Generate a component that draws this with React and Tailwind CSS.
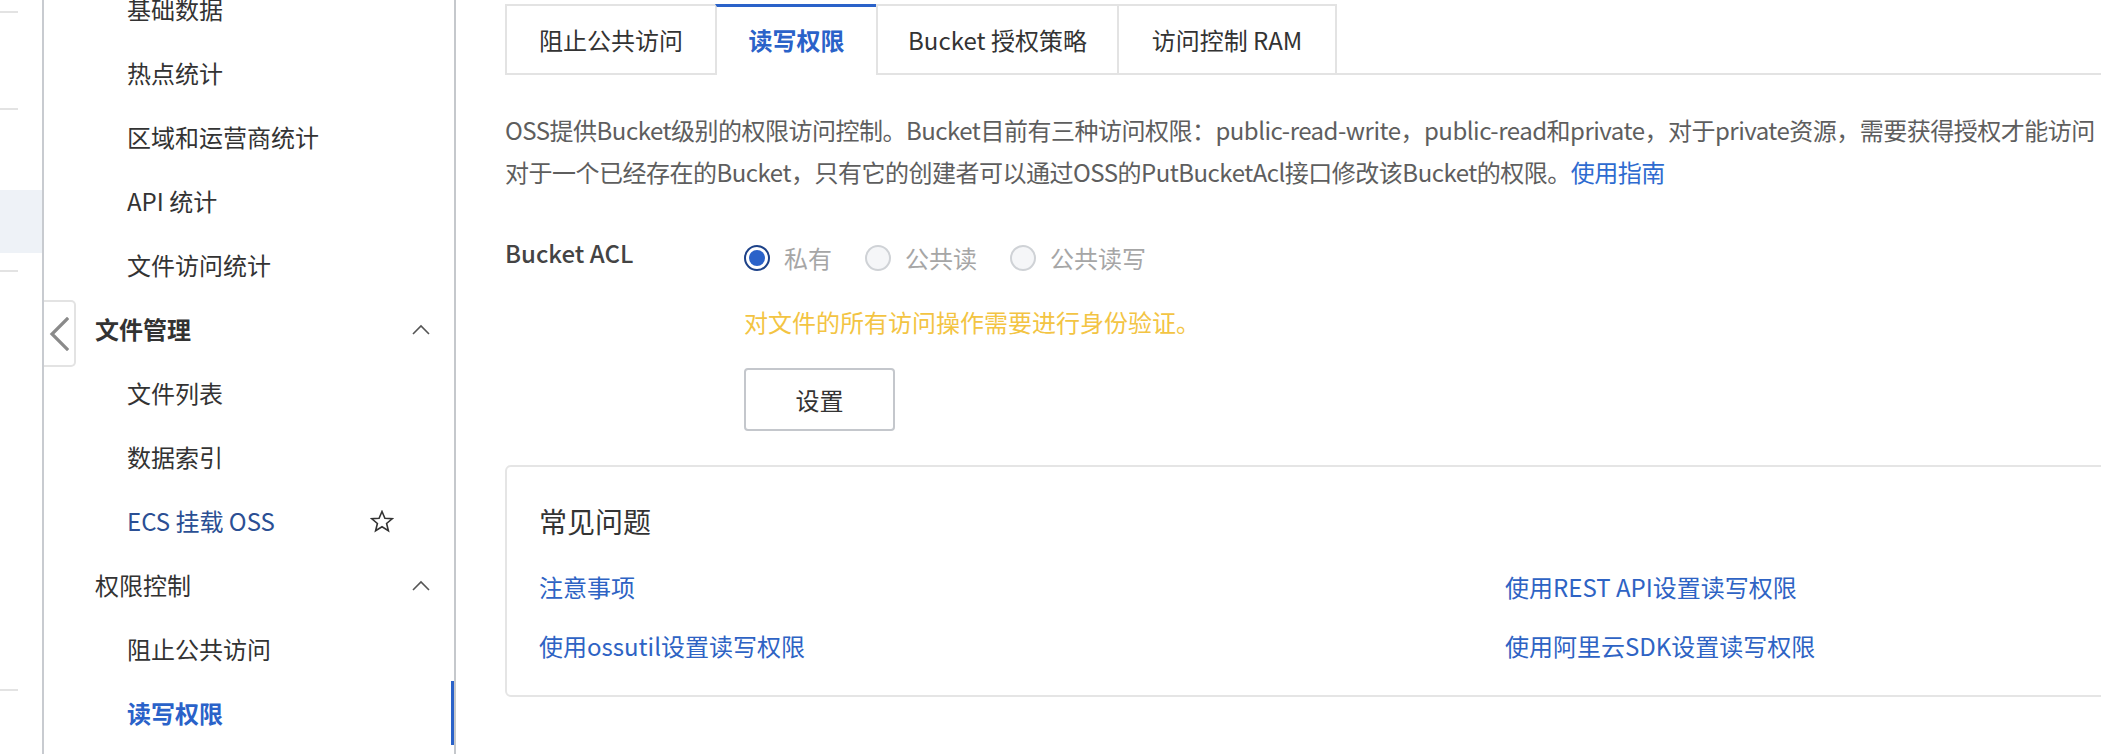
import React from 'react';

const font = { fontFamily: '"Noto Sans CJK SC", "Noto Sans", sans-serif' };

const ChevronUpIcon = () => (
  <svg width="18" height="11" viewBox="0 0 18 11" fill="none" stroke="#555" strokeWidth="1.6">
    <polyline points="1,10 9,2 17,10" />
  </svg>
);

const ChevronLeftIcon = () => (
  <svg width="20" height="34" viewBox="0 0 20 34" fill="none" stroke="#8a8a8a" strokeWidth="3.2" strokeLinecap="square">
    <polyline points="18,2 3,17 18,32" />
  </svg>
);

const StarIcon = () => (
  <svg width="24" height="23" viewBox="0 0 24 23" fill="none" stroke="#333" strokeWidth="1.6" strokeLinejoin="miter">
    <polygon points="12,1.5 14.9,8.3 22.2,8.8 16.6,13.5 18.4,20.7 12,16.8 5.6,20.7 7.4,13.5 1.8,8.8 9.1,8.3" />
  </svg>
);

const menu = [
  { label: '基础数据' },
  { label: '热点统计' },
  { label: '区域和运营商统计' },
  { label: 'API 统计' },
  { label: '文件访问统计' },
  { label: '文件管理', header: true, bold: true },
  { label: '文件列表' },
  { label: '数据索引' },
  { label: 'ECS 挂载 OSS', link: true },
  { label: '权限控制', header: true },
  { label: '阻止公共访问' },
  { label: '读写权限', active: true },
];

const tabs = [
  { label: '阻止公共访问', w: 'w-[210px]' },
  { label: '读写权限', w: 'w-[161px]', active: true },
  { label: 'Bucket 授权策略', w: 'w-[241px]' },
  { label: '访问控制 RAM', w: 'w-[220px]', last: true },
];

const Radio = ({ checked, label }) => (
  <div className="flex items-center">
    {checked ? (
      <span className="w-[26px] h-[26px] rounded-full border-2 border-[#1d4289] bg-white flex items-center justify-center">
        <span className="w-[16px] h-[16px] rounded-full bg-[#2a62c9]" />
      </span>
    ) : (
      <span className="w-[26px] h-[26px] rounded-full border-2 border-[#cfd2d6] bg-[#f5f6f8]" />
    )}
    <span className="ml-[14px] text-[#a6a6a6]">{label}</span>
  </div>
);

export default function App() {
  return (
    <div style={font} className="flex w-[2101px] h-[754px] overflow-hidden bg-white text-[24px] text-[#333]">
      {/* left strip */}
      <div className="w-[42px] flex flex-col shrink-0">
        <div className="h-[11px]" />
        <div className="h-[2px] w-[18px] bg-[#e3e3e3]" />
        <div className="h-[95px]" />
        <div className="h-[2px] w-[18px] bg-[#e3e3e3]" />
        <div className="h-[80px]" />
        <div className="h-[63px] bg-[#eef2f7]" />
        <div className="h-[17px]" />
        <div className="h-[2px] w-[18px] bg-[#e3e3e3]" />
        <div className="h-[417px]" />
        <div className="h-[2px] w-[18px] bg-[#e3e3e3]" />
      </div>
      <div className="w-[2px] bg-[#c8cbd0] shrink-0" />

      {/* sidebar */}
      <aside className="relative w-[412px] shrink-0 border-r-2 border-[#c5c8cc]">
        <div className="-mt-[23px] flex flex-col">
          {menu.map((m) => (
            <div
              key={m.label}
              className={`h-16 flex items-center justify-between ${m.header ? 'pl-[51px] pr-[24px]' : 'pl-[83px] pr-[60px]'} ${m.active ? 'shadow-[inset_-3px_0_0_#2a62c9]' : ''}`}
            >
              <span
                className={`${m.bold ? 'font-bold' : ''} ${m.link ? 'text-[#2b4f94]' : ''} ${m.active ? 'font-bold text-[#2a62c9]' : ''}`}
              >
                {m.label}
              </span>
              {m.header && <ChevronUpIcon />}
              {m.link && <StarIcon />}
            </div>
          ))}
        </div>
        <button className="absolute left-0 top-[300px] w-[32px] h-[67px] bg-white border-2 border-l-0 border-[#e3e3e3] rounded-r-[5px] flex items-center justify-center">
          <ChevronLeftIcon />
        </button>
      </aside>

      {/* main */}
      <main className="pl-[49px] shrink-0">
        <div className="w-[2000px]">
          <div className="mt-[4px] flex border-b-2 border-[#e3e3e3]">
            {tabs.map((t) => (
              <div
                key={t.label}
                className={`${t.w} h-[69px] flex items-center justify-center border-l-2 ${t.last ? 'border-r-2' : ''} ${
                  t.active
                    ? 'border-t-[3px] border-t-[#2a62c9] border-l-[#e3e3e3] bg-white -mb-[2px] h-[71px] pb-[2px] font-bold text-[#2a62c9]'
                    : 'border-t-2 border-[#e3e3e3]'
                }`}
              >
                {t.label}
              </div>
            ))}
          </div>

          <div className="mt-[34px] leading-[42px] text-[#5e5e5e] tracking-[-0.5px]">
            <div className="whitespace-nowrap">
              OSS提供Bucket级别的权限访问控制。Bucket目前有三种访问权限：public-read-write，public-read和private，对于private资源，需要获得授权才能访问
            </div>
            <div className="whitespace-nowrap">
              对于一个已经存在的Bucket，只有它的创建者可以通过OSS的PutBucketAcl接口修改该Bucket的权限。
              <a className="text-[#2e6bd0]">使用指南</a>
            </div>
          </div>

          <div className="mt-[39px] flex items-start">
            <div className="w-[239px] leading-[42px] font-medium text-[#444]">Bucket ACL</div>
            <div className="flex flex-col items-start">
              <div className="mt-[5px] h-[42px] flex items-center gap-[33px]">
                <Radio checked label="私有" />
                <Radio label="公共读" />
                <Radio label="公共读写" />
              </div>
              <div className="mt-[22px] leading-[42px] text-[#f3c443]">对文件的所有访问操作需要进行身份验证。</div>
              <button className="mt-[25px] w-[151px] h-[63px] border-2 border-[#c4c7cc] rounded-[4px] bg-white text-[#333]">
                设置
              </button>
            </div>
          </div>

          <div className="mt-[34px] border-2 border-[#e5e5e5] rounded-[6px] px-[32px] pt-[36px] pb-[28px]">
            <div className="text-[28px] leading-[36px] text-[#333]">常见问题</div>
            <div className="mt-[27px] grid grid-cols-[966px_1fr] gap-y-[17px] leading-[42px] text-[#2e63c4]">
              <a>注意事项</a>
              <a>使用REST API设置读写权限</a>
              <a>使用ossutil设置读写权限</a>
              <a>使用阿里云SDK设置读写权限</a>
            </div>
          </div>
        </div>
      </main>
    </div>
  );
}
